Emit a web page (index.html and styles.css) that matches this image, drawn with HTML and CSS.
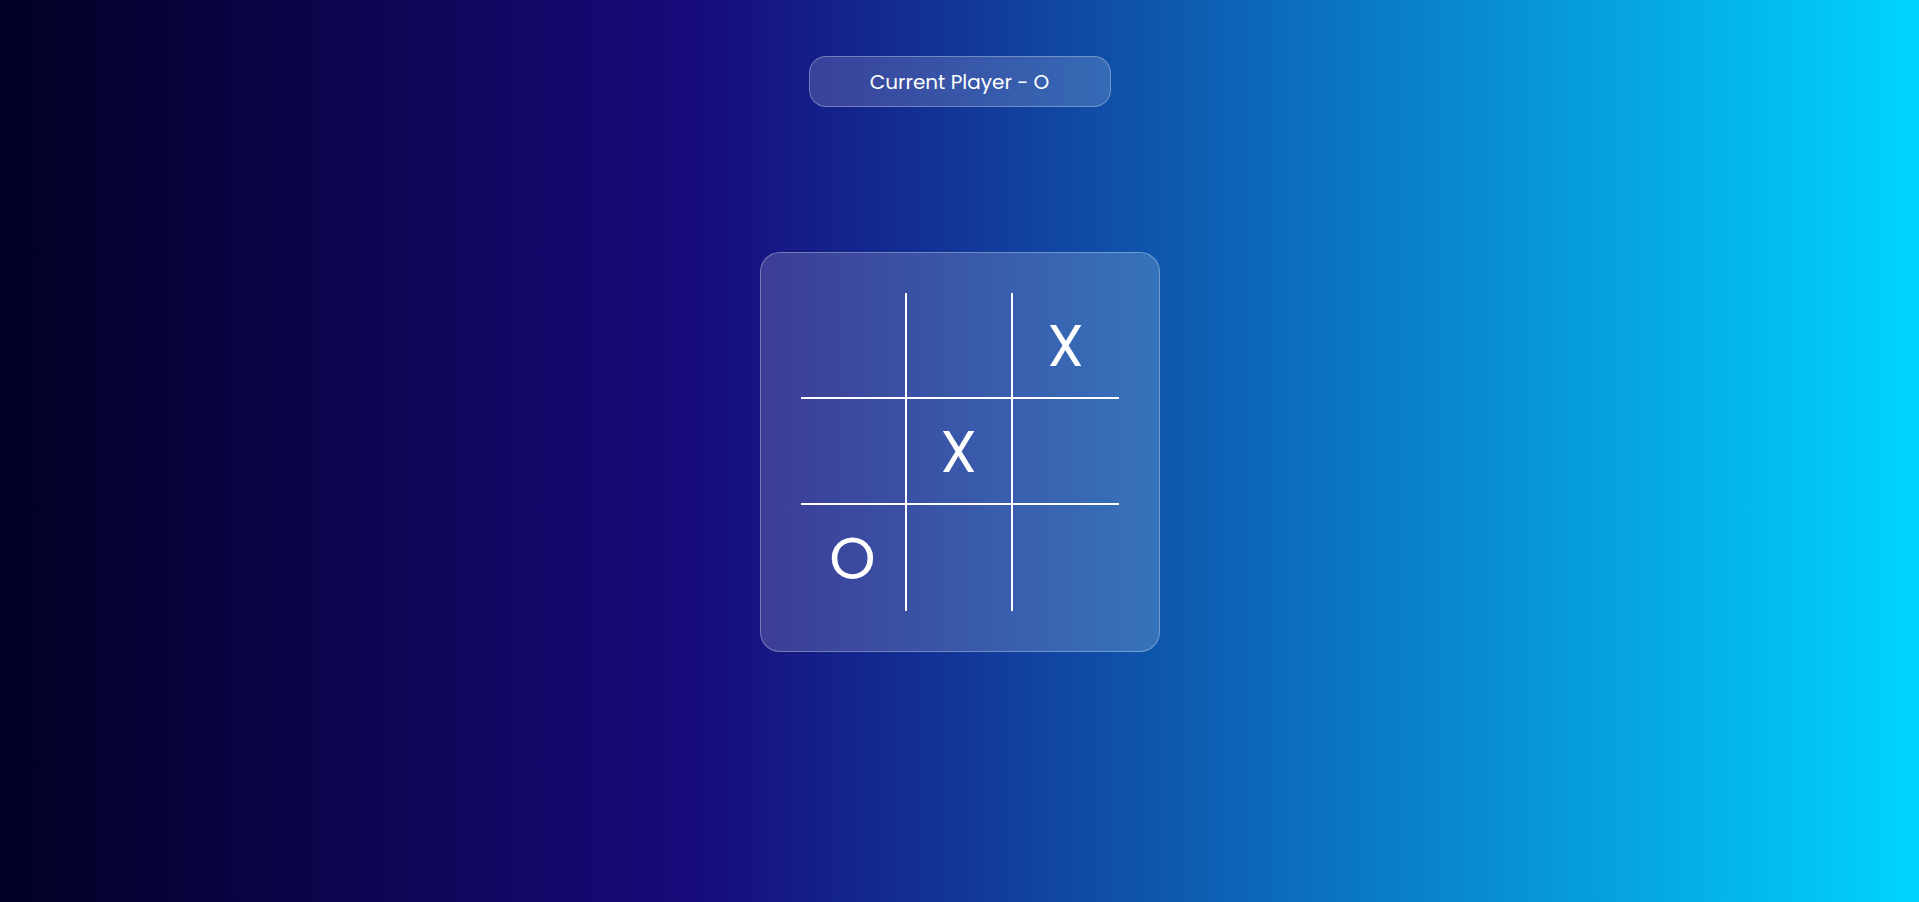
FILE: index.html
```html
<!DOCTYPE html>
<html lang="en">
<head>
<meta charset="UTF-8">
<title>Tic Tac Toe</title>
<link rel="stylesheet" href="styles.css">
</head>
<body>
<main class="page">
  <div class="status">Current Player - O</div>
  <div class="board">
    <div class="grid">
      <div class="cell c-r c-b"></div>
      <div class="cell c-r c-b"></div>
      <div class="cell c-b">X</div>
      <div class="cell c-r c-b"></div>
      <div class="cell c-r c-b">X</div>
      <div class="cell c-b"></div>
      <div class="cell c-r">O</div>
      <div class="cell c-r"></div>
      <div class="cell"></div>
    </div>
  </div>
</main>
</body>
</html>
```
FILE: styles.css
```css
* { box-sizing: border-box; }
html, body {
  margin: 0;
  height: 100%;
}
body {
  background: linear-gradient(90deg, #020024 0%, #170a7b 36%, #00d4ff 100%);
  font-family: "Poppins", "Open Sans", sans-serif;
  color: #fff;
}
.page {
  display: flex;
  flex-direction: column;
  align-items: center;
  padding-top: 56px;
}
.status {
  width: 302px;
  height: 51px;
  display: flex;
  align-items: center;
  justify-content: center;
  border-radius: 17px;
  background: rgba(255, 255, 255, 0.16);
  border: 1px solid rgba(255, 255, 255, 0.3);
  font-size: 20px;
}
.board {
  margin-top: 145px;
  width: 400px;
  height: 400px;
  border-radius: 20px;
  background: rgba(255, 255, 255, 0.17);
  border: 1px solid rgba(255, 255, 255, 0.3);
  padding: 40px;
}
.grid {
  display: grid;
  grid-template-columns: repeat(3, 106px);
  grid-template-rows: repeat(3, 106px);
}
.cell {
  display: flex;
  align-items: center;
  justify-content: center;
  font-size: 59px;
  line-height: 1;
}
.c-r { border-right: 2px solid #fff; }
.c-b { border-bottom: 2px solid #fff; }
```
